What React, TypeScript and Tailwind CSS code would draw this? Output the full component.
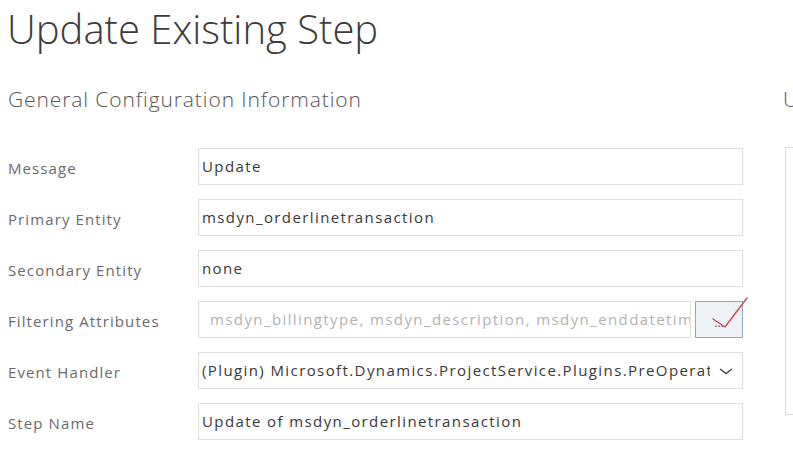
import React from "react";

const rows: { label: string; value: string; kind?: "filter" | "select" }[] = [
  { label: "Message", value: "Update" },
  { label: "Primary Entity", value: "msdyn_orderlinetransaction" },
  { label: "Secondary Entity", value: "none" },
  { label: "Filtering Attributes", value: "msdyn_billingtype, msdyn_description, msdyn_enddatetime", kind: "filter" },
  { label: "Event Handler", value: "(Plugin) Microsoft.Dynamics.ProjectService.Plugins.PreOperationOrderLineTransaction", kind: "select" },
  { label: "Step Name", value: "Update of msdyn_orderlinetransaction" },
];

export default function App() {
  return (
    <div
      className="w-[793px] h-[449px] overflow-hidden bg-white text-[#333]"
      style={{ fontFamily: '"Open Sans", "Noto Sans", sans-serif' }}
    >
      <h1 className="pl-[7px] pt-[4px] text-[40px] leading-[50px] font-light text-[#3b3b3b] whitespace-nowrap">
        Update Existing Step
      </h1>
      <div className="flex mt-[31px]">
        <div className="w-[783px] shrink-0 pl-[8px]">
          <div className="text-[21px] leading-[28px] h-[28px] font-light text-[#555] tracking-[0.9px] whitespace-nowrap">
            General Configuration Information
          </div>
          <div className="mt-[35px] flex flex-col gap-[14px]">
            {rows.map((r) => (
              <div key={r.label} className="flex items-center h-[37px]">
                <div className="w-[190px] shrink-0 pt-[4px] text-[15px] tracking-[1.1px] text-[#6a6a6a] whitespace-nowrap">
                  {r.label}
                </div>
                {r.kind === "filter" ? (
                  <div className="flex h-[37px] w-[545px] items-center">
                    <div className="flex-1 h-full border border-[#e0e0e0] flex items-center pl-[11px] overflow-hidden whitespace-nowrap text-[15px] tracking-[1.4px] text-[#b3b3b3]">
                      {r.value}
                    </div>
                    <div className="relative w-[48px] h-[37px] ml-[4px] border border-[#8fa9c4] bg-[#eef2f7] flex items-center justify-center">
                      <span className="text-[12px] leading-none text-[#555] mt-[6px]">...</span>
                      <svg className="absolute left-0 top-[-10px]" width="56" height="40" viewBox="0 0 56 40">
                        <path d="M17 27 L29 35 L51 6" fill="none" stroke="#c94a55" strokeWidth="1.4" strokeLinecap="round" strokeLinejoin="round" />
                      </svg>
                    </div>
                  </div>
                ) : r.kind === "select" ? (
                  <div className="flex h-[37px] w-[545px] border border-[#e0e0e0] items-center pl-[3px] pr-[8px]">
                    <div className="flex-1 overflow-hidden whitespace-nowrap text-[15px] tracking-[1.4px] text-[#383838]">
                      {r.value}
                    </div>
                    <svg width="16" height="10" viewBox="0 0 16 10" className="ml-[8px]">
                      <path d="M2 3 L8 7.5 L14 3" fill="none" stroke="#444" strokeWidth="1.5" />
                    </svg>
                  </div>
                ) : (
                  <div className="flex h-[37px] w-[545px] border border-[#e0e0e0] items-center px-[3px] text-[15px] tracking-[1.4px] text-[#383838] whitespace-nowrap overflow-hidden">
                    {r.value}
                  </div>
                )}
              </div>
            ))}
          </div>
        </div>
        <div className="flex-1 overflow-hidden">
          <div className="text-[21px] leading-[28px] h-[28px] font-light text-[#555] whitespace-nowrap">
            Update Information
          </div>
          <div className="mt-[34px] ml-[2px] h-[268px] border border-[#dcdcdc] border-r-0" />
        </div>
      </div>
    </div>
  );
}
